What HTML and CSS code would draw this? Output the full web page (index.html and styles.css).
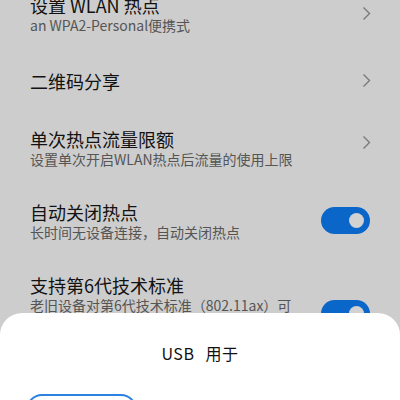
FILE: index.html
```html
<!DOCTYPE html>
<html lang="zh-CN">
<head>
<meta charset="utf-8">
<link rel="stylesheet" href="styles.css">
</head>
<body>
<div class="screen">
  <div class="list">
    <div class="row two">
      <div class="text">
        <div class="title">设置 WLAN 热点</div>
        <div class="sub">an WPA2-Personal便携式</div>
      </div>
      <svg class="chev" width="9" height="15" viewBox="0 0 9 15"><polyline points="1.5,1.5 7.5,7.5 1.5,13.5" fill="none" stroke="#7a7a7a" stroke-width="1.4"/></svg>
    </div>
    <div class="row one">
      <div class="text">
        <div class="title">二维码分享</div>
      </div>
      <svg class="chev" width="9" height="15" viewBox="0 0 9 15"><polyline points="1.5,1.5 7.5,7.5 1.5,13.5" fill="none" stroke="#7a7a7a" stroke-width="1.4"/></svg>
    </div>
    <div class="row two">
      <div class="text">
        <div class="title">单次热点流量限额</div>
        <div class="sub">设置单次开启WLAN热点后流量的使用上限</div>
      </div>
      <svg class="chev up" width="9" height="15" viewBox="0 0 9 15"><polyline points="1.5,1.5 7.5,7.5 1.5,13.5" fill="none" stroke="#7a7a7a" stroke-width="1.4"/></svg>
    </div>
    <div class="row two">
      <div class="text">
        <div class="title">自动关闭热点</div>
        <div class="sub">长时间无设备连接，自动关闭热点</div>
      </div>
      <div class="toggle"><div class="knob"></div></div>
    </div>
    <div class="row two">
      <div class="text">
        <div class="title">支持第6代技术标准</div>
        <div class="sub">老旧设备对第6代技术标准（802.11ax）可</div>
      </div>
      <div class="toggle low"><div class="knob"></div></div>
    </div>
  </div>
  <div class="sheet">
    <div class="sheet-title">USB 用于</div>
    <div class="option"></div>
  </div>
</div>
</body>
</html>
```

FILE: styles.css
```css
* { box-sizing: border-box; }
html, body { margin: 0; padding: 0; }
body {
  width: 400px;
  height: 400px;
  overflow: hidden;
  background: #cdcdcd;
  font-family: "Noto Sans CJK SC", "Noto Sans", sans-serif;
}
.screen {
  position: relative;
  width: 400px;
  height: 400px;
  overflow: hidden;
}
.list {
  margin-top: -23px;
}
.row {
  display: flex;
  align-items: center;
  padding: 0 30px 0 30px;
}
.row.two { height: 73px; }
.row.one { height: 61px; }
.text { flex: 1; min-width: 0; }
.title {
  font-size: 18px;
  line-height: 22px;
  color: #121212;
  white-space: nowrap;
}
.sub {
  font-size: 14px;
  line-height: 18px;
  color: #555555;
  white-space: nowrap;
}
.chev { flex: none; margin-right: -1px; }
.chev.up { margin-top: -10px; }
.toggle {
  flex: none;
  width: 49px;
  height: 27px;
  border-radius: 14px;
  background: #0a66c9;
  display: flex;
  align-items: center;
  justify-content: flex-end;
  padding-right: 6px;
}
.toggle.low { margin-top: 40px; }
.knob {
  width: 15px;
  height: 15px;
  border-radius: 50%;
  background: #d2d2d2;
}
.sheet {
  position: absolute;
  left: 0;
  right: 0;
  top: 313px;
  bottom: 0;
  background: #ffffff;
  border-radius: 22px 22px 0 0;
  padding-top: 28px;
}
.sheet-title {
  text-align: center;
  font-size: 16px;
  line-height: 24px;
  color: #111111;
  word-spacing: 7px;
  letter-spacing: 0.5px;
}
.option {
  margin: 29px 0 0 26px;
  width: 111px;
  height: 40px;
  border: 2px solid #2c80e0;
  border-radius: 16px;
}
```
